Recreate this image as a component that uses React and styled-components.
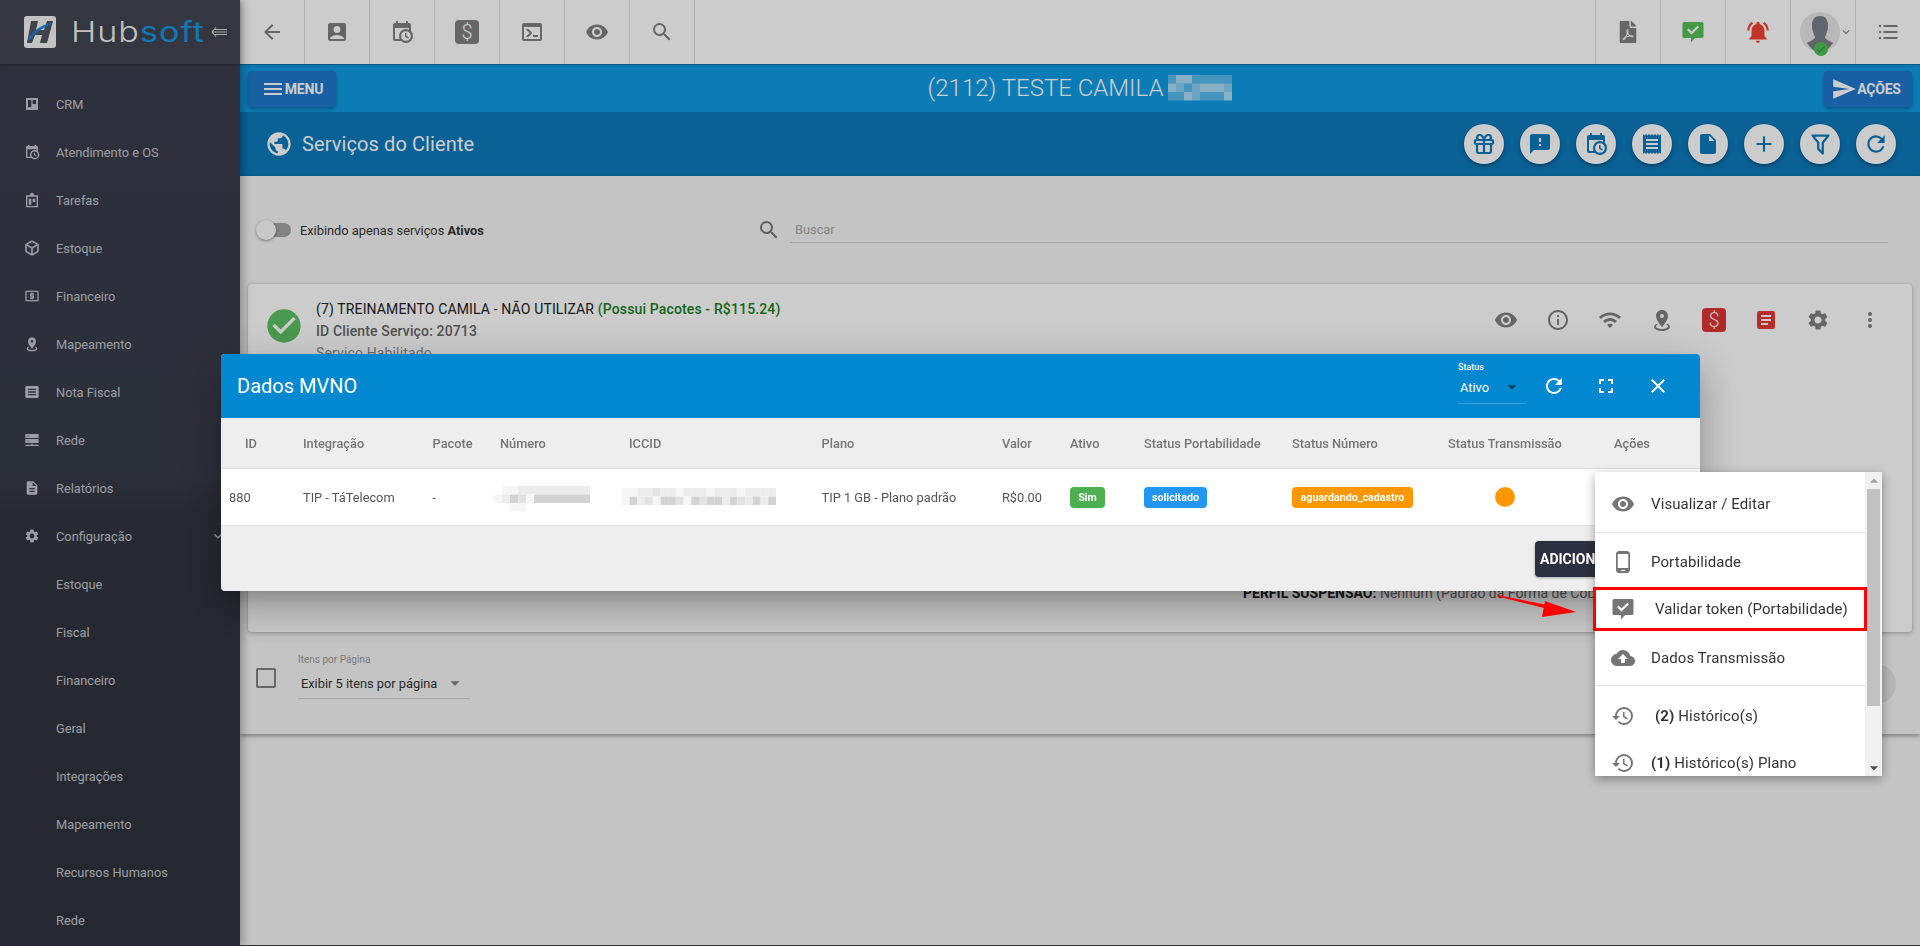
import React from "react";
import styled, { createGlobalStyle } from "styled-components";
import {
  MdArrowBack, MdAccountBox, MdVisibility, MdSearch, MdNotificationsActive, MdMenu, MdSend, MdPublic,
  MdSmsFailed, MdReceipt, MdInsertDriveFile, MdAdd, MdRefresh, MdCheckCircle, MdInfoOutline,
  MdWifi, MdSettings, MdMoreVert, MdFullscreen, MdClose, MdExpandMore, MdLocalAtm,
  MdDescription, MdPhoneAndroid, MdCloudUpload, MdHistory, MdArrowDropDown, MdArrowDropUp, MdCheck,
} from "react-icons/md";
import { FaFilePdf } from "react-icons/fa";
import { Box, Gift } from "lucide-react";

const CAL_CLOCK = "M15,13H16.5V15.82L18.94,17.23L18.19,18.53L15,16.69V13M19,8H5V19H9.67C9.24,18.09 9,17.07 9,16A7,7 0 0,1 16,9C17.07,9 18.09,9.24 19,9.67V8M5,21C3.89,21 3,20.1 3,19V5C3,3.89 3.89,3 5,3H6V1H8V3H16V1H18V3H19A2,2 0 0,1 21,5V11.1C22.24,12.36 23,14.09 23,16A7,7 0 0,1 16,23C14.09,23 12.36,22.24 11.1,21H5M16,11.15A4.85,4.85 0 0,0 11.15,16C11.15,18.68 13.32,20.85 16,20.85A4.85,4.85 0 0,0 20.85,16C20.85,13.32 18.68,11.15 16,11.15Z";
const CONSOLE = "M20,19V7H4V19H20M20,3A2,2 0 0,1 22,5V19A2,2 0 0,1 20,21H4A2,2 0 0,1 2,19V5C2,3.89 2.9,3 4,3H20M13,17V15H18V17H13M9.58,13L5.57,9H8.4L11.7,12.3C12.09,12.69 12.09,13.33 11.7,13.72L8.42,17H5.59L9.58,13Z";
const COMMENT_CHECK = "M3 2H21A1.5 1.5 0 0 1 22.5 3.5V16.5A1.5 1.5 0 0 1 21 18H14L10 22.5V18H3A1.5 1.5 0 0 1 1.5 16.5V3.5A1.5 1.5 0 0 1 3 2ZM10.5 14.5L18 7.2L16.4 5.7L10.5 11.4L7.6 8.6L6 10.1Z";
const FILTER = "M15,19.88C15.04,20.18 14.94,20.5 14.71,20.71C14.32,21.1 13.69,21.1 13.3,20.71L9.29,16.7C9.06,16.47 8.96,16.16 9,15.87V10.75L4.21,4.62C3.87,4.19 3.95,3.56 4.38,3.22C4.57,3.08 4.78,3 5,3V3H19V3C19.22,3 19.43,3.08 19.62,3.22C20.05,3.56 20.13,4.19 19.79,4.62L15,10.75V19.88M7.04,5L11,10.06V15.58L13,17.58V10.05L16.96,5H7.04Z";
const MAP_RADIUS = "M12,2C15.31,2 18,4.66 18,7.95C18,12.41 12,19 12,19C12,19 6,12.41 6,7.95C6,4.66 8.69,2 12,2M12,6A2,2 0 0,0 10,8A2,2 0 0,0 12,10A2,2 0 0,0 14,8A2,2 0 0,0 12,6M20,19C20,21.21 16.42,23 12,23C7.58,23 4,21.21 4,19C4,17.71 5.22,16.56 7.11,15.83L7.75,16.74C6.67,17.19 6,17.81 6,18.5C6,19.88 8.69,21 12,21C15.31,21 18,19.88 18,18.5C18,17.81 17.33,17.19 16.25,16.74L16.89,15.83C18.78,16.56 20,17.71 20,19Z";

const Global = createGlobalStyle`
  html, body { margin: 0; padding: 0; height: 946px; overflow: hidden; background: #2a2e3d; }
  * { box-sizing: border-box; }
  body { font-family: Roboto, "Liberation Sans", sans-serif; color: #333; }
`;

const Shell = styled.div`display: flex; height: 945px; background: #f5f5f5;`;
const Sidebar = styled.aside`
  width: 240px; flex: none; position: relative; z-index: 2;
  background: linear-gradient(180deg, #3a3e4c 0, #383c4a 50%, #323540 54%, #2f323c 100%);
  box-shadow: 3px 0 8px rgba(0,0,0,.28);
`;
const Brand = styled.div`
  height: 64px; display: flex; align-items: center; padding-left: 24px; background: #41454f;
  box-shadow: 0 1px 3px rgba(0,0,0,.3);
`;
const LogoMark = styled.svg`width: 32px; height: 32px; flex: none;`;
const LogoText = styled.span`
  display: block; margin-left: 15px; width: 132px; font-family: Inter, Roboto, sans-serif; font-size: 28px; font-weight: 300; letter-spacing: .8px;
  color: #f2f2f2; line-height: 32px; transform: scaleX(1.22); transform-origin: left center; white-space: nowrap;
  b { font-weight: 400; color: #1497e2; }
`;
const Collapse = styled.svg`width: 16px; height: 10px; margin-left: 8px; color: #d8d8d8;`;
const NavList = styled.nav`padding-top: 16px;`;
const NavItem = styled.div`
  height: 48px; display: flex; align-items: center; position: relative;
  padding-left: ${p => p.$sub ? "56px" : "24px"}; font-size: 12.8px; color: #c3c6ce;
`;
const NavIcon = styled.span`
  width: 16px; height: 16px; margin-right: 16px; display: flex; align-items: center; justify-content: center; color: #c3c6ce;
  svg { width: 16px; height: 16px; flex: none; }
`;
const NavChevron = styled.span`position: absolute; right: 14px; top: 16px; display: flex; color: #c3c6ce;`;

const Main = styled.main`flex: 1; min-width: 0; display: flex; flex-direction: column;`;
const TopBar = styled.header`
  height: 65px; display: flex; justify-content: space-between; background: #fff; border-bottom: 1px solid #0a72a8; flex: none;
`;
const TopGroup = styled.div`display: flex;`;
const TopCell = styled.div`
  width: 65px; height: 64px; display: flex; align-items: center; justify-content: center; color: ${p => p.$c || "#808080"};
  border-right: ${p => p.$right ? "none" : "1px solid #dedede"};
  border-left: ${p => p.$right ? "1px solid #dedede" : "none"};
  position: relative;
`;
const Ico = styled.svg`width: ${p => p.$s || 24}px; height: ${p => p.$s || 24}px; fill: currentColor; flex: none;`;
const AvatarImage = styled.svg`width: 40px; height: 40px; flex: none; margin-right: 6px;`;
const AvatarMenu = styled.span`position: absolute; right: 2px; top: 25px; display: flex; color: #808080;`;
const AvatarBadge = styled.span`
  position: absolute; left: 23px; top: 42px; width: 14px; height: 14px; border-radius: 50%; background: #4ec052;
  display: flex; align-items: center; justify-content: center; color: #3f8c44;
`;
const SubBar = styled.div`
  height: 47px; flex: none; background: #0f9ce5; display: flex; align-items: center; justify-content: space-between; padding: 0 8px;
  box-shadow: inset 0 2px 2px rgba(0,0,0,.08);
`;
const BarButton = styled.button`
  width: 88px; height: 36px; border: 0; border-radius: 4px; background: #2077ce; color: #fff; display: flex; align-items: center;
  justify-content: center; gap: 0; font: 700 14px Roboto, sans-serif; letter-spacing: -.2px; padding: 0 ${p => p.$pr || 0}px 0 0; box-shadow: 0 2px 4px rgba(0,0,0,.3);
`;
const ClientTitle = styled.div`display: flex; align-items: center; font-size: 24px; font-weight: 300; color: #fff; gap: 5px; margin-top: -2px;`;
const Redact = styled.svg`display: block; flex: none;`;
const PageHeader = styled.div`
  height: 64px; flex: none; background: #0c7abb; display: flex; align-items: center; justify-content: space-between;
  padding: 0 24px 0 25px; color: #fff;
`;
const PageTitle = styled.div`display: flex; align-items: center; gap: 9px; font-size: 20px; font-weight: 400; letter-spacing: .1px;`;
const RoundGroup = styled.div`display: flex; gap: 16px;`;
const RoundBtn = styled.div`
  width: 40px; height: 40px; border-radius: 50%; background: #fff; color: #0c7abb; display: flex; align-items: center; justify-content: center;
  box-shadow: 0 2px 4px rgba(0,0,0,.3);
`;
const Panel = styled.section`
  height: 558px; flex: none; background: #f5f5f5; box-shadow: 0 2px 4px rgba(0,0,0,.35); padding: 40px 0 0 0; position: relative;
`;
const Toolbar = styled.div`display: flex; align-items: center; height: 28px; padding: 0 32px 0 23px;`;
const ToggleGroup = styled.div`width: 494px; display: flex; align-items: center; font-size: 12.8px; color: #333; gap: 9px;`;
const ToggleTrack = styled.span`
  width: 28px; height: 14px; border-radius: 7px; background: #a3a3a3; position: relative; display: block;
`;
const ToggleThumb = styled.span`
  position: absolute; left: -7px; top: -3px; width: 20px; height: 20px; border-radius: 50%; background: #fafafa;
  box-shadow: 0 1px 3px rgba(0,0,0,.4);
`;
const SearchIcon = styled.span`width: 24px; height: 24px; color: #777; display: flex; margin-right: 9px;`;
const SearchField = styled.div`
  flex: 1; height: 26px; border-bottom: 1px solid #d0d0d0; padding: 2px 0 0 5px; font-size: 12.8px; color: #a5a5a5; line-height: 22px;
`;
const Card = styled.article`
  margin: 40px 8px 0; height: 348px; background: #fff; border-radius: 4px; box-shadow: 0 1px 4px rgba(0,0,0,.3); padding: 14px 30px 0 16px;
`;
const CardTop = styled.div`display: flex; height: 66px;`;
const CardStatus = styled.span`width: 40px; height: 40px; margin: 8px 12px 0 0; color: #5cc062; flex: none;`;
const CardText = styled.div`flex: 1; font-size: 14px; line-height: 22px; letter-spacing: .14px;`;
const CardLine = styled.div`
  font-weight: ${p => p.$w || 400}; color: ${p => p.$c || "#222"};
  b { color: #1a7f1a; font-weight: 500; }
`;
const CardIcons = styled.div`display: flex; gap: 28px; height: 24px; margin-top: 10px; color: #808080;`;
const MoneyBox = styled.span`
  width: 24px; height: 24px; border-radius: 4px; background: ${p => p.$bg}; color: ${p => p.$fg || "#fff"}; display: flex; align-items: center; justify-content: center;
  font-size: 20px; font-weight: 300; line-height: 24px; flex: none;
`;
const NoteSlot = styled.span`width: 24px; height: 24px; display: flex; align-items: center; justify-content: center; color: #e53935;`;
const Perfil = styled.div`
  margin: 218px 0 0 979px; font-size: 14px; line-height: 22px; color: #666;
  b { font-weight: 700; color: #222; }
`;
const Pagination = styled.div`display: flex; align-items: flex-start; margin-top: 23px; padding: 0 24px 0 16px;`;
const Check = styled.span`
  width: 20px; height: 20px; margin: 13px 22px 0 0; border: 2px solid #808080; border-radius: 2px; flex: none;
`;
const PageSelect = styled.div`width: 172px; border-bottom: 1px solid #d0d0d0; padding: 0 2px 4px 3px;`;
const TinyLabel = styled.div`font-size: 10px; line-height: 10px; color: #999; margin-left: -3px;`;
const SelectValue = styled.div`
  margin-top: 9px; height: 20px; line-height: 20px; font-size: 12.8px; color: #333; display: flex; justify-content: space-between; align-items: center;
  span { display: flex; color: #808080; margin-right: 2px; margin-top: -2px; }
`;
const PagerCircle = styled.span`
  margin: 9px 0 0 auto; width: 40px; height: 40px; border-radius: 50%; background: #e4e4e4; display: block;
`;

const Overlay = styled.div`position: fixed; inset: 0 0 1px 0; background: rgba(0,0,0,.2); z-index: 5;`;
const Dialog = styled.div`
  position: fixed; left: 221px; top: 354px; width: 1479px; height: 237px; z-index: 6; border-radius: 4px; overflow: hidden; background: #eee;
  box-shadow: 0 11px 15px -7px rgba(0,0,0,.2), 0 24px 38px 3px rgba(0,0,0,.14), 0 9px 46px 8px rgba(0,0,0,.12);
`;
const DialogHead = styled.div`
  height: 64px; background: #0288d1; color: #fff; display: flex; align-items: center; padding: 0 30px 0 16px;
`;
const DialogTitle = styled.div`font-size: 20px; font-weight: 400; flex: 1;`;
const StatusSelect = styled.div`width: 68px; margin-right: 16px; margin-top: -6px; border-bottom: 1px solid rgba(255,255,255,.2); height: 42px; color: #fff;`;
const StatusLabel = styled.div`font-size: 9px; line-height: 10px; font-weight: 500;`;
const StatusValue = styled.div`
  font-size: 12.8px; line-height: 18px; margin-top: 6px; padding-left: 2px; display: flex; justify-content: space-between; align-items: center;
  span { display: flex; color: rgba(0,0,0,.5); margin-right: 3px; margin-top: -2px; }
`;
const HeadActions = styled.div`display: flex; gap: 28px; color: #fff;`;
const gridCols = "82px 129.6px 67.4px 129px 192.6px 180.4px 68px 74px 148px 156px 166px 86px";
const THead = styled.div`
  display: grid; grid-template-columns: ${gridCols}; height: 51px; align-items: center; background: #eee; border-bottom: 1px solid #ddd;
  font-size: 12.8px; font-weight: 500; color: #757575;
`;
const TRow = styled.div`
  display: grid; grid-template-columns: ${gridCols}; height: 57px; align-items: center; background: #fff; border-bottom: 1px solid #e4e4e4;
  font-size: 12.8px; color: #555;
`;
const Cell = styled.div`padding-left: ${p => p.$pl || 0}px; position: relative;`;
const BlurCell = styled.div`margin-left: ${p => p.$ml}px; margin-top: ${p => p.$mt || 0}px;`;
const Badge = styled.span`
  display: block; width: ${p => p.$w}px; height: 21px; line-height: 21px; text-align: center; border-radius: 4px; background: ${p => p.$bg};
  color: #fff; font-size: 10.7px; font-weight: 700;
`;
const Dot = styled.span`display: block; width: 20px; height: 20px; border-radius: 50%; background: #ff9800; margin-left: 47px;`;
const DialogFoot = styled.div`height: 65px; display: flex; align-items: flex-start; padding: 15px 0 0 1314px;`;
const AddBtn = styled.button`
  height: 36px; width: 165px; flex: none; border: 0; border-radius: 4px; background: #2d3040; color: #fff; font: 700 14px Roboto, sans-serif; text-align: left; padding: 0 0 0 5px; white-space: nowrap; overflow: hidden;
  box-shadow: 0 1px 3px rgba(0,0,0,.3);
`;

const Menu = styled.div`
  position: fixed; left: 1595px; top: 472px; width: 287px; height: 304px; z-index: 7; background: #fff; display: flex; overflow: hidden;
  box-shadow: 0 3px 10px rgba(0,0,0,.35);
`;
const MenuList = styled.div`width: 270px; flex: none;`;
const MenuItem = styled.div`
  height: ${p => p.$h}px; display: flex; align-items: center; padding: ${p => p.$pt || 0}px 0 ${p => p.$pb || 0}px 16px; gap: 16px; font-size: 15px; color: #333;
  letter-spacing: .1px; white-space: nowrap; border-bottom: ${p => p.$div ? "1px solid #e4e4e4" : "none"};
  b { font-weight: 700; }
`;
const MenuIcon = styled.span`width: 24px; height: 24px; color: #757575; display: flex; flex: none;`;
const MenuLabel = styled.span`margin-left: ${p => p.$shift || 0}px;`;
const Scroll = styled.div`width: 17px; flex: none; background: #f1f1f1; position: relative; display: flex; flex-direction: column; align-items: center;`;
const ScrollArrow = styled.span`height: 17px; display: flex; align-items: center; justify-content: center; color: ${p => p.$c}; flex: none;`;
const ScrollTrack = styled.div`flex: 1; width: 100%; padding: 0 2px;`;
const ScrollThumb = styled.div`height: 217px; background: #c1c1c1;`;
const Marker = styled.div`
  position: fixed; left: 1593px; top: 587px; width: 274px; height: 44px; border: 3px solid #f00; z-index: 8;
`;
const Arrow = styled.svg`position: fixed; left: 1490px; top: 585px; width: 95px; height: 40px; z-index: 8;`;

function Mosaic({ w, h, rows, cell = 8 }) {
  return (
    <Redact width={w} height={h} viewBox={`0 0 ${w} ${h}`}>
      {rows.map((r, y) => r.map((c, x) => c ? <rect key={x + "-" + y} x={x * cell} y={y * 8.5} width={cell} height={8.5} fill={c} /> : null))}
    </Redact>
  );
}

const Sid = ({ d, s }) => <Ico $s={s} viewBox="0 0 24 24"><path d={d} fillRule="evenodd" /></Ico>;
const Custom = {
  crm: <Ico viewBox="0 0 24 24"><path fillRule="evenodd" d="M4 3H20A1 1 0 0 1 21 4V20A1 1 0 0 1 20 21H4A1 1 0 0 1 3 20V4A1 1 0 0 1 4 3ZM6 6V17H11V6ZM13 6V12H18V6Z" /></Ico>,
  tasks: <Ico viewBox="0 0 24 24"><path fillRule="evenodd" d="M4 5H9V4A3 3 0 0 1 15 4V5H20A1 1 0 0 1 21 6V22A1 1 0 0 1 20 23H4A1 1 0 0 1 3 22V6A1 1 0 0 1 4 5ZM5 7V21H19V7ZM7 10H11V19H7ZM13 10H17V15H13Z" /></Ico>,
  nota: <Ico viewBox="0 0 24 24"><path fillRule="evenodd" d="M4 3H20A2 2 0 0 1 22 5V19A2 2 0 0 1 20 21H4A2 2 0 0 1 2 19V5A2 2 0 0 1 4 3ZM6 7V9H18V7ZM6 11V13H18V11ZM6 15V17H18V15Z" /></Ico>,
  rede: <Ico viewBox="0 0 24 24"><path fillRule="evenodd" d="M2 3H22V9H2ZM2 10.5H22V16.5H2ZM11 17.5H13V19H22V21H2V19H11ZM4 5.5V6.5H9V5.5ZM4 13V14H9V13Z" /></Ico>,
  note: <Ico $s={18} viewBox="0 0 18 18"><path fillRule="evenodd" d="M2 0H16A2 2 0 0 1 18 2V16A2 2 0 0 1 16 18H2A2 2 0 0 1 0 16V2A2 2 0 0 1 2 0ZM4 4V6H14V4ZM4 8V10H14V8ZM4 12V14H11V12Z" /></Ico>,
};

const nav = [
  ["CRM", Custom.crm], ["Atendimento e OS", <Sid d={CAL_CLOCK} />], ["Tarefas", Custom.tasks], ["Estoque", <Box strokeWidth={2.4} />],
  ["Financeiro", <MdLocalAtm />], ["Mapeamento", <Sid d={MAP_RADIUS} />], ["Nota Fiscal", Custom.nota], ["Rede", Custom.rede],
  ["Relatórios", <MdDescription />], ["Configuração", <MdSettings />],
];
const subNav = ["Estoque", "Fiscal", "Financeiro", "Geral", "Integrações", "Mapeamento", "Recursos Humanos", "Rede"];

const L = "#f6f6f6", M = "#e2e2e2", D = "#d3d3d3", E = "#ececec";
const numRows = [
  [null, L, L, E, E, E, E, E, E, E, E, E],
  [L, E, D, M, L, D, D, D, D, D, D, D],
  [null, null, L, L, null, null, null, null, null, null, null, null],
];
const iccRows = [
  [L, L, E, E, M, E, E, L, E, E, E, L, E, E, E, L, E, E, E, E],
  [L, D, E, M, L, D, D, M, L, D, M, D, D, E, D, M, E, D, E, D],
];
const T1 = "rgba(255,255,255,.5)", T2 = "rgba(255,255,255,.3)", T3 = "rgba(255,255,255,.65)";
const titleRows = [
  [T2, T3, T3, T2, T2, T2, T2, T2],
  [T3, T1, T2, T1, T3, T3, T3, T1],
  [T2, T2, T3, T1, T2, T2, T2, T3],
];

export default function App() {
  return (
    <>
      <Global />
      <Shell>
        <Sidebar>
          <Brand>
            <LogoMark viewBox="0 0 32 32">
              <rect width="32" height="32" rx="3" fill="#f4f4f4" />
              <path d="M7 5H14L12 14H20L23 5H29L23 27H16L18 19H11L8 27H3Z" fill="#505460" />
              <path d="M3 26C6 17 14 10 29 6C24 11 16 13 11 18C8 21 6 24 3 26Z" fill="#1a84dc" />
            </LogoMark>
            <LogoText>Hub<b>soft</b></LogoText>
            <Collapse viewBox="0 0 16 10" fill="none" stroke="currentColor" strokeWidth="1.1">
              <path d="M5 .5L1 5L5 9.5M2 5H16M4 2.5H16M4 7.5H16" />
            </Collapse>
          </Brand>
          <NavList>
            {nav.map(([t, i]) => (
              <NavItem key={t}>
                <NavIcon>{i}</NavIcon>{t}
                {t === "Configuração" && <NavChevron><MdExpandMore size={16} /></NavChevron>}
              </NavItem>
            ))}
            {subNav.map((t, i) => <NavItem $sub key={t + i}>{t}</NavItem>)}
          </NavList>
        </Sidebar>
        <Main>
          <TopBar>
            <TopGroup>
              <TopCell><MdArrowBack size={24} /></TopCell>
              <TopCell><MdAccountBox size={24} /></TopCell>
              <TopCell><Sid d={CAL_CLOCK} /></TopCell>
              <TopCell><MoneyBox $bg="#808080">$</MoneyBox></TopCell>
              <TopCell><Sid d={CONSOLE} /></TopCell>
              <TopCell><MdVisibility size={24} /></TopCell>
              <TopCell><MdSearch size={24} /></TopCell>
            </TopGroup>
            <TopGroup>
              <TopCell $right><FaFilePdf size={22} /></TopCell>
              <TopCell $right $c="#54c05a"><Sid d={COMMENT_CHECK} /></TopCell>
              <TopCell $right $c="#f44336"><MdNotificationsActive size={26} /></TopCell>
              <TopCell $right>
                <AvatarImage viewBox="0 0 40 40">
                  <circle cx="20" cy="20" r="20" fill="#e6e6e6" />
                  <path d="M20 4C26 4 28 8 28 14C28 19 26 22 25 25C26 28 30 29 33 31C29 37 25 40 20 40C15 40 11 37 7 31C10 29 14 28 15 25C14 22 12 19 12 14C12 8 14 4 20 4Z" fill="#7b7e8a" />
                </AvatarImage>
                <AvatarBadge><MdCheck size={12} /></AvatarBadge>
                <AvatarMenu><MdExpandMore size={14} /></AvatarMenu>
              </TopCell>
              <TopCell $right>
                <Ico viewBox="0 0 24 24">
                  <circle cx="4" cy="6" r="1.2" /><circle cx="4" cy="12" r="1.2" /><circle cx="4" cy="18" r="1.2" />
                  <rect x="7.5" y="5" width="14" height="2" /><rect x="7.5" y="11" width="14" height="2" /><rect x="7.5" y="17" width="14" height="2" />
                </Ico>
              </TopCell>
            </TopGroup>
          </TopBar>
          <SubBar>
            <BarButton><MdMenu size={24} />MENU</BarButton>
            <ClientTitle>
              (2112) TESTE CAMILA
              <Mosaic w={64} h={26} rows={titleRows} />
            </ClientTitle>
            <BarButton $pr={4}><MdSend size={26} />AÇÕES</BarButton>
          </SubBar>
          <PageHeader>
            <PageTitle><MdPublic size={28} />Serviços do Cliente</PageTitle>
            <RoundGroup>
              <RoundBtn><Gift size={24} strokeWidth={2.2} /></RoundBtn>
              <RoundBtn><MdSmsFailed size={24} /></RoundBtn>
              <RoundBtn><Sid d={CAL_CLOCK} /></RoundBtn>
              <RoundBtn><MdReceipt size={24} /></RoundBtn>
              <RoundBtn><MdInsertDriveFile size={24} /></RoundBtn>
              <RoundBtn><MdAdd size={26} /></RoundBtn>
              <RoundBtn><Sid d={FILTER} s={27} /></RoundBtn>
              <RoundBtn><MdRefresh size={26} /></RoundBtn>
            </RoundGroup>
          </PageHeader>
          <Panel>
            <Toolbar>
              <ToggleGroup>
                <ToggleTrack><ToggleThumb /></ToggleTrack>
                <span>Exibindo apenas serviços <b>Ativos</b></span>
              </ToggleGroup>
              <SearchIcon><MdSearch size={24} /></SearchIcon>
              <SearchField>Buscar</SearchField>
            </Toolbar>
            <Card>
              <CardTop>
                <CardStatus><MdCheckCircle size={40} /></CardStatus>
                <CardText>
                  <CardLine>(7) TREINAMENTO CAMILA - NÃO UTILIZAR <b>(Possui Pacotes - R$115.24)</b></CardLine>
                  <CardLine $w={500} $c="#666">ID Cliente Serviço: 20713</CardLine>
                  <CardLine $c="#888">Serviço Habilitado</CardLine>
                </CardText>
                <CardIcons>
                  <MdVisibility size={24} />
                  <MdInfoOutline size={24} />
                  <MdWifi size={24} />
                  <Sid d={MAP_RADIUS} />
                  <MoneyBox $bg="#dc3535" $fg="#ffe8e8">$</MoneyBox>
                  <NoteSlot>{Custom.note}</NoteSlot>
                  <MdSettings size={24} />
                  <MdMoreVert size={24} />
                </CardIcons>
              </CardTop>
              <Perfil><b>PERFIL SUSPENSÃO:</b> Nenhum (Padrão da Forma de Cobrança)</Perfil>
            </Card>
            <Pagination>
              <Check />
              <PageSelect>
                <TinyLabel>Itens por Página</TinyLabel>
                <SelectValue>Exibir 5 itens por página<span><MdArrowDropDown size={22} /></span></SelectValue>
              </PageSelect>
              <PagerCircle />
            </Pagination>
          </Panel>
        </Main>
      </Shell>
      <Overlay />
      <Dialog>
        <DialogHead>
          <DialogTitle>Dados MVNO</DialogTitle>
          <StatusSelect>
            <StatusLabel>Status</StatusLabel>
            <StatusValue>Ativo<span><MdArrowDropDown size={22} /></span></StatusValue>
          </StatusSelect>
          <HeadActions>
            <MdRefresh size={24} />
            <MdFullscreen size={24} />
            <MdClose size={24} />
          </HeadActions>
        </DialogHead>
        <THead>
          <Cell $pl={24}>ID</Cell><Cell>Integração</Cell><Cell>Pacote</Cell><Cell>Número</Cell><Cell>ICCID</Cell><Cell>Plano</Cell>
          <Cell>Valor</Cell><Cell>Ativo</Cell><Cell>Status Portabilidade</Cell><Cell>Status Número</Cell><Cell>Status Transmissão</Cell><Cell>Ações</Cell>
        </THead>
        <TRow>
          <Cell $pl={8}>880</Cell>
          <Cell>TIP - TáTelecom</Cell>
          <Cell>-</Cell>
          <BlurCell $ml={-6} $mt={3}><Mosaic w={96} h={26} rows={numRows} /></BlurCell>
          <BlurCell $ml={-7}><Mosaic w={154} h={18} cell={7.7} rows={iccRows} /></BlurCell>
          <Cell>TIP 1 GB - Plano padrão</Cell>
          <Cell>R$0.00</Cell>
          <Cell><Badge $w={35} $bg="#4caf50">Sim</Badge></Cell>
          <Cell><Badge $w={63} $bg="#2196f3">solicitado</Badge></Cell>
          <Cell><Badge $w={121} $bg="#ff9800">aguardando_cadastro</Badge></Cell>
          <Cell><Dot /></Cell>
          <Cell />
        </TRow>
        <DialogFoot><AddBtn>ADICIONAR</AddBtn></DialogFoot>
      </Dialog>
      <Menu>
        <MenuList>
          <MenuItem $h={61} $pt={4} $div><MenuIcon><MdVisibility size={24} /></MenuIcon><MenuLabel>Visualizar / Editar</MenuLabel></MenuItem>
          <MenuItem $h={52} $pt={6}><MenuIcon><MdPhoneAndroid size={24} /></MenuIcon><MenuLabel>Portabilidade</MenuLabel></MenuItem>
          <MenuItem $h={48}><MenuIcon><Sid d={COMMENT_CHECK} /></MenuIcon><MenuLabel $shift={4}>Validar token (Portabilidade)</MenuLabel></MenuItem>
          <MenuItem $h={53} $pb={2} $div><MenuIcon><MdCloudUpload size={24} /></MenuIcon><MenuLabel>Dados Transmissão</MenuLabel></MenuItem>
          <MenuItem $h={53} $pt={6}><MenuIcon><MdHistory size={24} /></MenuIcon><MenuLabel $shift={4}><b>(2)</b> Histórico(s)</MenuLabel></MenuItem>
          <MenuItem $h={48}><MenuIcon><MdHistory size={24} /></MenuIcon><MenuLabel><b>(1)</b> Histórico(s) Plano</MenuLabel></MenuItem>
        </MenuList>
        <Scroll>
          <ScrollArrow $c="#a3a3a3"><MdArrowDropUp size={20} /></ScrollArrow>
          <ScrollTrack><ScrollThumb /></ScrollTrack>
          <ScrollArrow $c="#505050"><MdArrowDropDown size={20} /></ScrollArrow>
        </Scroll>
      </Menu>
      <Marker />
      <Arrow viewBox="0 0 95 40">
        <path d="M8 10L8 11.5L62 25L62 21Z" fill="#f00" />
        <path d="M86 27L52 32L55 16Z" fill="#f00" />
      </Arrow>
    </>
  );
}
